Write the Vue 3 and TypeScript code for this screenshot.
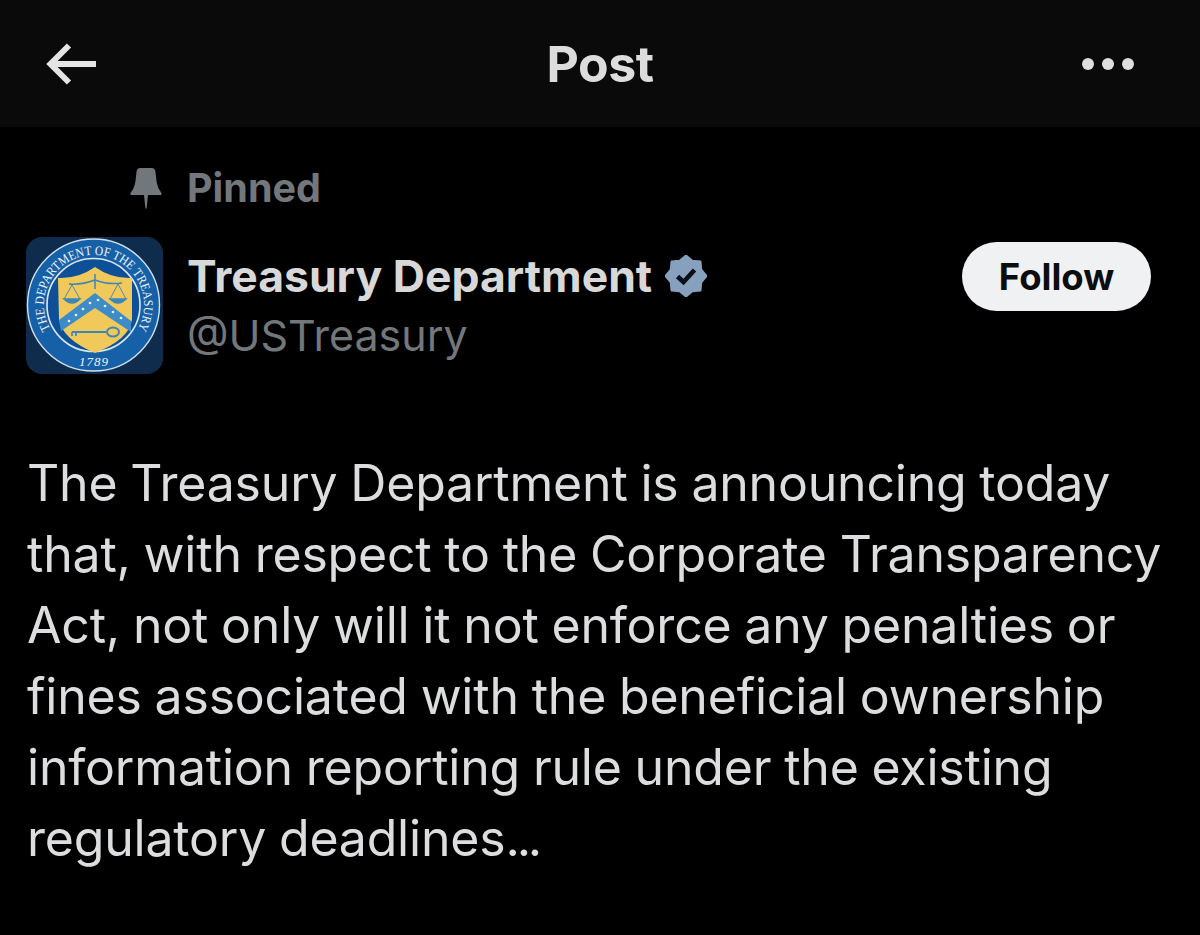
<script setup lang="ts">
const bodyLines: string[] = [
  'The Treasury Department is announcing today',
  'that, with respect to the Corporate Transparency',
  'Act, not only will it not enforce any penalties or',
  'fines associated with the beneficial ownership',
  'information reporting rule under the existing',
  'regulatory deadlines',
]

// 16 point badge outline round the verified tick
const badgePoints = Array.from({ length: 16 }, (_, i) => {
  const r = i % 2 === 0 ? 20.5 : 16.5
  const a = (Math.PI * 2 * i) / 16 - Math.PI / 2
  return `${(21 + r * Math.cos(a)).toFixed(2)},${(21 + r * Math.sin(a)).toFixed(2)}`
}).join(' ')
</script>

<template>
  <div class="screen">
    <header class="topbar">
      <svg class="back" width="50" height="42" viewBox="0 0 50 42" fill="none" stroke="#e4e4e4" stroke-width="6">
        <path d="M50 21H5" />
        <path d="M23 2.5L4.5 21L23 39.5" />
      </svg>
      <div class="title">Post</div>
      <div class="dots"><i></i><i></i><i></i></div>
    </header>

    <main class="post">
      <div class="pinned">
        <svg width="32" height="41" viewBox="0 0 32 41" fill="#72777b">
          <path d="M6.5 4Q6.8 0 10.5 0H21.5Q25.2 0 25.5 4L26.5 13Q27.5 20 31.5 25V27H0.5V25Q4.5 20 5.5 13Z" />
          <path d="M14 27H18L16.6 40.5H15.4Z" />
        </svg>
        <span>Pinned</span>
      </div>

      <div class="author">
        <svg class="avatar" width="137" height="137" viewBox="0 0 137 137">
          <defs>
            <path id="sealArc" d="M24.2 92A50 50 0 1 1 111.8 92" />
          </defs>
          <rect width="137" height="137" rx="16" fill="#0f2c4c" />
          <circle cx="67.5" cy="68" r="66" fill="#1660a8" stroke="#cfe0ee" stroke-width="1.4" />
          <circle cx="67.5" cy="68" r="46.5" fill="#0e5098" stroke="#dbe7f1" stroke-width="1.6" />
          <text class="seal-text" fill="#eef3f7" font-size="13">
            <textPath href="#sealArc" textLength="207" lengthAdjust="spacingAndGlyphs">THE DEPARTMENT OF THE TREASURY</textPath>
          </text>
          <text class="seal-text" x="68" y="129" fill="#eef3f7" font-size="13" text-anchor="middle" font-style="italic" letter-spacing="1">1789</text>
          <path d="M32 41Q52 42 69 30Q86 42 106 41V82Q104 102 69 116Q36 102 33 82Z" fill="#f0c95a" />
          <path d="M33 83L69 56L105 84V95L69 71L35 94Z" fill="#3d8cc8" />
          <g fill="#eaf4fa">
            <circle cx="43" cy="84" r="1.3" /><circle cx="50" cy="78" r="1.3" /><circle cx="57" cy="72" r="1.3" />
            <circle cx="64" cy="66" r="1.3" /><circle cx="72" cy="63" r="1.3" /><circle cx="79" cy="69" r="1.3" />
            <circle cx="87" cy="75" r="1.3" /><circle cx="95" cy="81" r="1.3" />
          </g>
          <g fill="none" stroke="#3d86b8" stroke-width="1.5">
            <path d="M69 37V52M43 47Q56 48 69 43Q82 48 96 46" />
            <path d="M46 48L38 62M46 48L54 62M92 47L84 62M92 47L100 62" stroke-width="0.9" />
            <path d="M38 62Q46 70 54 62Z M84 62Q92 70 100 62Z" fill="#3d86b8" />
            <path d="M46 95H80" stroke-width="2.2" />
            <path d="M46 95V99M50 95V99" stroke-width="1.6" />
            <ellipse cx="87" cy="95" rx="6" ry="4.5" stroke-width="2" />
          </g>
        </svg>

        <div class="names">
          <div class="name-row">
            <span class="name">Treasury Department</span>
            <svg class="badge" width="42" height="42" viewBox="0 0 42 42">
              <polygon :points="badgePoints" fill="#86a0bd" stroke="#86a0bd" stroke-width="2" stroke-linejoin="round" />
              <path d="M12.5 21.5L18.5 27L29.5 15" fill="none" stroke="#0b0f16" stroke-width="4.6" />
            </svg>
          </div>
          <div class="handle">@USTreasury</div>
        </div>

        <button class="follow">Follow</button>
      </div>

      <p class="body">
        <span v-for="(line, i) in bodyLines" :key="line">{{ line }}<em v-if="i === bodyLines.length - 1">...</em></span>
      </p>
    </main>
  </div>
</template>

<style>
html,
body {
  background: #000;
}
</style>

<style scoped>
.screen {
  width: 1200px;
  height: 935px;
  overflow: hidden;
  background: #000;
  font-family: Inter, "Noto Sans", sans-serif;
}

.topbar {
  height: 127px;
  background: #0a0a0a;
  display: grid;
  grid-template-columns: 1fr auto 1fr;
  align-items: center;
  padding: 0 46px;
}

.back {
  display: block;
}

.title {
  font-size: 50px;
  font-weight: 700;
  color: #dcdcdc;
  letter-spacing: -0.5px;
}

.dots {
  justify-self: end;
  display: flex;
  gap: 8px;
  margin-right: 20px;
}

.dots i {
  width: 12px;
  height: 12px;
  border-radius: 50%;
  background: #dedede;
}

.post {
  padding: 41px 0 0 26px;
}

.pinned {
  display: flex;
  align-items: center;
  gap: 25px;
  padding-left: 104px;
  height: 40px;
  font-size: 39.5px;
  font-weight: 700;
  color: #72777b;
}

.pinned span {
  margin-top: -1px;
}

.author {
  display: flex;
  align-items: flex-start;
  margin-top: 29px;
  padding-right: 49px;
}

.avatar {
  display: block;
  flex: none;
}

.names {
  margin-left: 24px;
  padding-top: 13px;
}

.name-row {
  display: flex;
  align-items: center;
  gap: 13px;
  height: 52px;
}

.name {
  font-size: 44.5px;
  font-weight: 700;
  color: #d8d8d8;
  white-space: nowrap;
}

.badge {
  display: block;
}

.handle {
  margin-top: 8px;
  font-size: 43px;
  color: #72777b;
  line-height: 50px;
}

.follow {
  margin-left: auto;
  margin-top: 5px;
  width: 189px;
  height: 69px;
  border: none;
  border-radius: 35px;
  background: #eff1f3;
  color: #0c0d0e;
  font-family: inherit;
  font-size: 36.5px;
  font-weight: 700;
  padding: 0;
}

.body {
  margin: 74px 0 0 1px;
  font-size: 50px;
  line-height: 71px;
  letter-spacing: -0.2px;
  word-spacing: -1px;
  color: #dcddde;
}

.body span {
  display: block;
  white-space: nowrap;
}

.body em {
  font-style: normal;
  letter-spacing: -3.2px;
}

.seal-text {
  font-family: "Liberation Serif", serif;
}
</style>
